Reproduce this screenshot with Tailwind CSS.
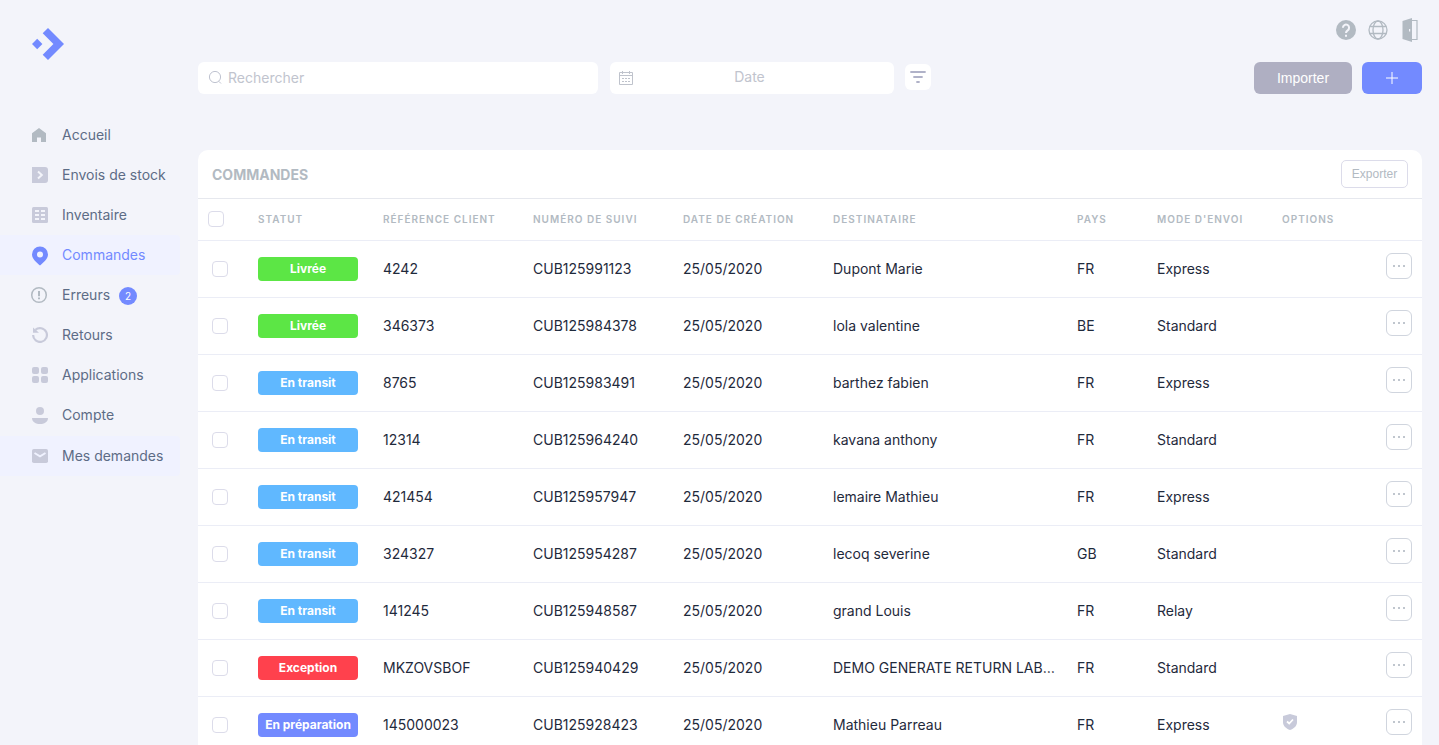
<!DOCTYPE html>
<html lang="fr">
<head>
<meta charset="utf-8">
<meta name="viewport" content="width=device-width, initial-scale=1">
<title>Commandes</title>
<script src="https://cdn.jsdelivr.net/npm/@tailwindcss/browser@4"></script>
</head>
<body class="bg-[#f3f4fa] font-['Inter',sans-serif] text-sm text-[#1f2a3c]">
<div class="flex h-screen overflow-hidden">

  <aside class="w-[180px] shrink-0 pt-7">
    <a href="#" aria-label="Accueil du site" class="ml-8 block size-8">
      <svg viewBox="0 0 32 32" class="size-8" fill="#738aff"><path d="M5.2 10.8 10.4 16 5.2 21.2 0 16Z"/><path d="M16 0 32 16 16 32 10.7 26.7 21.4 16 10.7 5.3Z"/></svg>
    </a>
    <nav class="mt-[55px] flex flex-col text-[#5d6c86]">
      <a href="#" class="flex h-10 items-center gap-[14px] pl-8">
        <svg viewBox="0 0 16 16" class="size-4" fill="#b2bac2"><path d="M7 1 14 6.200V15H9V10.500H5V15H0V6.200Z"/></svg>Accueil</a>
      <a href="#" class="flex h-10 items-center gap-[14px] pl-8">
        <svg viewBox="0 0 16 16" class="size-4"><path fill="#c8cada" d="M0 0H13a3 3 0 0 1 3 3V13a3 3 0 0 1-3 3H0Z"/><path d="M6 4.500 9.800 8 6 11.500" fill="none" stroke="#f3f4fa" stroke-width="2"/></svg>Envois de stock</a>
      <a href="#" class="flex h-10 items-center gap-[14px] pl-8">
        <svg viewBox="0 0 16 16" class="size-4"><rect width="16" height="16" rx="1.500" fill="#c8cada"/><path fill="#f3f4fa" d="M3 3H7V5H3ZM9 3H13V5H9ZM3 7H7V9H3ZM9 7H13V9H9ZM3 11H7V13H3ZM9 11H13V13H9Z"/></svg>Inventaire</a>
      <a href="#" aria-current="page" class="flex h-10 items-center gap-[14px] rounded-r bg-[#f0f2ff] pl-8 text-[#738aff]">
        <svg viewBox="0 0 16 20" class="h-5 w-4 translate-y-px" fill="#738aff" fill-rule="evenodd"><path d="M8 0.500A8 8 0 0 1 16 8.500C16 13 11 17 8 19.500 5 17 0 13 0 8.500A8 8 0 0 1 8 0.500ZM8 5.500a3 3 0 1 0 0 6 3 3 0 0 0 0-6Z"/></svg>Commandes</a>
      <a href="#" class="flex h-10 items-center gap-[14px] pl-8">
        <svg viewBox="0 0 16 16" class="size-4 overflow-visible"><circle cx="7" cy="8" r="7.300" fill="none" stroke="#b2bac2" stroke-width="1.500"/><path fill="#b2bac2" d="M6 4H8V9.300H6ZM6 10.500H8V12.300H6Z"/></svg>Erreurs
        <span class="-ml-[5px] mt-0.5 flex size-[18px] items-center justify-center rounded-full bg-[#738aff] text-[10px] text-white">2</span></a>
      <a href="#" class="flex h-10 items-center gap-[14px] pl-8">
        <svg viewBox="0 0 16 16" class="size-4"><path d="M1.100 8A6.900 6.900 0 1 0 3.400 2.900" fill="none" stroke="#c8cada" stroke-width="2.200"/><path fill="#c8cada" d="M1 0.500 7 5.800H1Z"/></svg>Retours</a>
      <a href="#" class="flex h-10 items-center gap-[14px] pl-8">
        <svg viewBox="0 0 16 16" class="size-4" fill="#c8cada"><rect width="7" height="7" rx="2"/><rect x="9" width="7" height="7" rx="2"/><rect y="9" width="7" height="7" rx="2"/><rect x="9" y="9" width="7" height="7" rx="2"/></svg>Applications</a>
      <a href="#" class="flex h-10 items-center gap-[14px] pl-8">
        <svg viewBox="0 0 16 17" class="h-[17px] w-4" fill="#c8cada"><circle cx="8" cy="4" r="4"/><path d="M0 11H16C16 15 12 17 8 17S0 15 0 11Z"/></svg>Compte</a>
      <a href="#" class="mt-px flex h-10 items-center gap-[14px] rounded-r bg-[#f0f2ff] pl-8">
        <svg viewBox="0 0 16 14" class="h-3.5 w-4"><rect width="16" height="14" rx="1.800" fill="#c8cada"/><path d="M2.500 4 8 7.300 13.500 4" fill="none" stroke="#f0f2ff" stroke-width="2"/></svg>Mes demandes</a>
    </nav>
  </aside>

  <main class="flex min-w-0 flex-1 flex-col pl-[18px] pr-[17px] pt-4">
    <div class="-mr-0.5 flex justify-end gap-1">
      <button type="button" aria-label="Aide" class="flex size-7 items-center justify-center"><svg viewBox="0 0 20 20" class="size-5"><circle cx="10" cy="10" r="10" fill="#b2bac2"/><path d="M6.900 7.700A3.100 3.100 0 1 1 11.700 10.300C10.600 11.100 10 11.500 10 13" fill="none" stroke="#f3f4fa" stroke-width="2"/><path fill="#f3f4fa" d="M9 14.700H11V16.700H9Z"/></svg></button>
      <button type="button" aria-label="Langue" class="flex size-7 items-center justify-center"><svg viewBox="0 0 20 20" class="size-5" fill="none" stroke="#b2bac2" stroke-width="1.300"><circle cx="10" cy="10" r="9"/><ellipse cx="10" cy="10" rx="5" ry="9"/><path d="M1.800 6.500H18.200M1.800 13.500H18.200"/></svg></button>
      <button type="button" aria-label="Déconnexion" class="flex size-7 items-center justify-center"><svg viewBox="0 0 16 24" class="h-6 w-4"><path fill="#b2bac2" fill-rule="evenodd" d="M0.500 3 10 0V24L0.500 21ZM7 11V13.500H8.200V11Z"/><path d="M10 2.500H15V21.500H10" fill="none" stroke="#b2bac2" stroke-width="1.200"/></svg></button>
    </div>

    <div class="mt-[18px] flex items-center">
      <label class="flex h-8 w-[400px] items-center gap-1.5 rounded-md bg-white pl-2.5 pr-3">
        <svg viewBox="0 0 14 14" class="size-3.5 shrink-0" fill="none" stroke="#bfc3d0" stroke-width="1"><circle cx="7" cy="6" r="5.600"/><path d="M10.800 10.300 13 12.500"/></svg>
        <input type="search" aria-label="Rechercher" placeholder="Rechercher" class="min-w-0 flex-1 bg-transparent outline-none placeholder:text-[#c1c4ce]">
      </label>
      <label class="ml-3 flex h-8 w-[284px] items-center rounded-md bg-white px-2">
        <svg viewBox="0 0 14 14" class="ml-px size-3.5 shrink-0" fill="none" stroke="#bfc3cc" stroke-width="1"><path d="M0.500 1.500H13.500V13.500H0.500ZM0.500 4.500H13.500M3.500 0V3M10.500 0V3"/><path d="M3 7.500H11M3 10.500H11" stroke-dasharray="2 1"/></svg>
        <input type="text" aria-label="Date" placeholder="Date" class="mb-0.5 mr-5 min-w-0 flex-1 bg-transparent text-center outline-none placeholder:text-[#c1c4ce]">
      </label>
      <button type="button" aria-label="Filtrer" class="mb-0.5 ml-[11px] flex size-[26px] items-center justify-center rounded-md bg-white"><svg viewBox="0 0 16 12" class="h-3 w-4" stroke="#b0b2c8" stroke-width="1.800" stroke-linecap="round"><path d="M1 1H15M4 6H12M7 11H9"/></svg></button>
      <button type="button" class="ml-auto h-8 w-[98px] rounded-md bg-[#afafc2] font-['Liberation_Sans',sans-serif] text-white">Importer</button>
      <button type="button" aria-label="Ajouter" class="ml-2.5 flex h-8 w-[60px] items-center justify-center rounded-md bg-[#738aff]"><svg viewBox="0 0 12 12" class="size-3" stroke="#fff" stroke-width="1"><path d="M6 0V12M0 6H12"/></svg></button>
    </div>

    <section class="mt-14 rounded-t-[10px] bg-white">
      <header class="flex h-12 items-center justify-between px-3.5">
        <h1 class="pt-0.5 font-bold text-[#b2bac2]">COMMANDES</h1>
        <button type="button" class="h-7 w-[67px] rounded-[5px] border border-[#dcdcea] font-['Liberation_Sans',sans-serif] text-xs text-[#b2bac2]">Exporter</button>
      </header>
      <table class="w-full table-fixed border-t border-[#e6e8ee] text-left">
        <colgroup><col class="w-[50px]"><col class="w-[125px]"><col class="w-[150px]"><col class="w-[150px]"><col class="w-[150px]"><col><col class="w-20"><col class="w-[125px]"><col class="w-[90px]"><col class="w-[60px]"></colgroup>
        <thead>
          <tr class="h-[42px] border-b border-[#ebedf6] text-[10px] tracking-[1px] text-[#b2bac2]">
            <th class="px-2.5 pb-0.5"><input type="checkbox" aria-label="Tout sélectionner" class="block size-4 appearance-none rounded border border-[#dcdcea] bg-white checked:bg-[#738aff]"></th>
            <th class="px-2.5 font-semibold">STATUT</th>
            <th class="px-2.5 font-semibold">RÉFÉRENCE CLIENT</th>
            <th class="px-2.5 font-semibold">NUMÉRO DE SUIVI</th>
            <th class="px-2.5 font-semibold">DATE DE CRÉATION</th>
            <th class="px-2.5 font-semibold">DESTINATAIRE</th>
            <th class="px-2.5 font-semibold">PAYS</th>
            <th class="px-2.5 font-semibold">MODE D'ENVOI</th>
            <th class="px-2.5 font-semibold">OPTIONS</th>
            <td></td>
          </tr>
        </thead>
        <tbody id="orders"></tbody>
      </table>
    </section>
  </main>
</div>

<script>
  const statusColors = {
    'Livrée': 'bg-[#5ce645]',
    'En transit': 'bg-[#60b8ff]',
    'Exception': 'bg-[#ff414d]',
    'En préparation': 'bg-[#738aff]'
  };
  const orders = [
    ['Livrée', '4242', 'CUB125991123', 'Dupont Marie', 'FR', 'Express'],
    ['Livrée', '346373', 'CUB125984378', 'lola valentine', 'BE', 'Standard'],
    ['En transit', '8765', 'CUB125983491', 'barthez fabien', 'FR', 'Express'],
    ['En transit', '12314', 'CUB125964240', 'kavana anthony', 'FR', 'Standard'],
    ['En transit', '421454', 'CUB125957947', 'lemaire Mathieu', 'FR', 'Express'],
    ['En transit', '324327', 'CUB125954287', 'lecoq severine', 'GB', 'Standard'],
    ['En transit', '141245', 'CUB125948587', 'grand Louis', 'FR', 'Relay'],
    ['Exception', 'MKZOVSBOF', 'CUB125940429', 'DEMO GENERATE RETURN LABEL', 'FR', 'Standard'],
    ['En préparation', '145000023', 'CUB125928423', 'Mathieu Parreau', 'FR', 'Express', true]
  ];
  const shield = '<svg viewBox="0 0 14 16" role="img" aria-label="Assurance" class="ml-px mb-1.5 h-4 w-3.5"><path fill="#c8cada" d="M7 0 14 2V8C14 12 11 14.500 7 16 3 14.500 0 12 0 8V2Z"/><path d="M4 7.500 6.200 9.500 10 5.500" fill="none" stroke="#fff" stroke-width="1.700"/></svg>';
  document.getElementById('orders').innerHTML = orders.map(([status, ref, tracking, name, country, mode, insured]) => `
    <tr class="h-[57px] border-b border-[#ebedf6]">
      <td class="pl-3.5"><input type="checkbox" aria-label="Sélectionner ${ref}" class="block size-4 appearance-none rounded border border-[#dcdcea] bg-white checked:bg-[#738aff]"></td>
      <td class="pl-2.5"><span class="flex h-6 w-[100px] items-center justify-center whitespace-nowrap rounded-[4px] text-xs font-bold text-white ${statusColors[status]}">${status}</span></td>
      <td class="px-2.5">${ref}</td>
      <td class="px-2.5">${tracking}</td>
      <td class="px-2.5">25/05/2020</td>
      <td class="truncate px-2.5">${name}</td>
      <td class="px-2.5">${country}</td>
      <td class="px-2.5">${mode}</td>
      <td class="px-2.5">${insured ? shield : ''}</td>
      <td class="px-2.5"><button type="button" aria-label="Actions ${ref}" class="mb-1.5 ml-auto flex size-[26px] items-center justify-center rounded-md border border-[#d0d5de]"><svg viewBox="0 0 12 2" class="h-0.5 w-3" fill="#c0c6ce"><path d="M0 0H2V2H0ZM5 0H7V2H5ZM10 0H12V2H10Z"/></svg></button></td>
    </tr>`).join('');
</script>
</body>
</html>
